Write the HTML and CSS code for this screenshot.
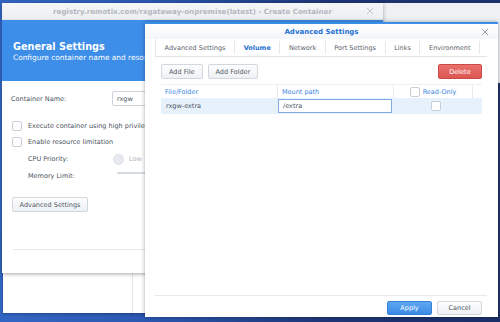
FILE: index.html
```html
<!DOCTYPE html>
<html>
<head>
<meta charset="utf-8">
<link rel="stylesheet" href="styles.css">
</head>
<body>
<div class="desktop">
  <div class="win win-low"><div class="pane-left"></div><div class="pane-right"></div></div>
  <div class="win win-right"></div>

  <div class="win create">
    <div class="titlebar">
      <span class="title">registry.remotix.com/rxgateway-onpremise(latest) - Create Container</span>
      <svg class="close" width="8" height="8" viewBox="0 0 8 8"><path d="M1 1L7 7M7 1L1 7" stroke="#c3c7cc" stroke-width="1"/></svg>
    </div>
    <div class="hero">
      <div class="hero-title">General Settings</div>
      <div class="hero-sub">Configure container name and resources</div>
    </div>
    <div class="form">
      <div class="name-row"><span class="lbl">Container Name:</span><div class="text-input">rxgw</div></div>
      <div class="cb-row first"><span class="cb"></span><span>Execute container using high privileges</span></div>
      <div class="cb-row"><span class="cb"></span><span>Enable resource limitation</span></div>
      <div class="sub-row cpu"><span class="sub-lbl">CPU Priority:</span><span class="radio"></span><span class="dim">Low</span></div>
      <div class="sub-row mem"><span class="sub-lbl">Memory Limit:</span><span class="slider"></span></div>
      <div class="adv-wrap"><button class="btn adv">Advanced Settings</button></div>
      <div class="hr"></div>
    </div>
  </div>

  <div class="dialog">
    <div class="dlg-head">
      <span class="dlg-title">Advanced Settings</span>
      <svg class="dlg-close" width="8" height="8" viewBox="0 0 8 8"><path d="M1 1L7 7M7 1L1 7" stroke="#9aa0a7" stroke-width="1"/></svg>
    </div>
    <div class="tabs">
      <div class="tab">Advanced Settings</div>
      <div class="tab active">Volume</div>
      <div class="tab">Network</div>
      <div class="tab">Port Settings</div>
      <div class="tab">Links</div>
      <div class="tab">Environment</div>
    </div>
    <div class="dlg-body">
      <div class="toolbar">
        <button class="btn">Add File</button>
        <button class="btn">Add Folder</button>
        <span class="spacer"></span>
        <button class="btn danger">Delete</button>
      </div>
      <div class="table">
        <div class="thead">
          <div class="c c1">File/Folder</div>
          <div class="c c2">Mount path</div>
          <div class="c c3"><span class="cb"></span><span>Read-Only</span></div>
          <div class="c c4"></div>
        </div>
        <div class="trow">
          <div class="c c1">rxgw-extra</div>
          <div class="c c2"><div class="cell-input">/extra</div></div>
          <div class="c c3"><span class="cb"></span></div>
          <div class="c c4"></div>
        </div>
      </div>
    </div>
    <div class="dlg-foot">
      <button class="btn primary">Apply</button>
      <button class="btn">Cancel</button>
    </div>
  </div>
</div>
</body>
</html>
```

FILE: styles.css
```css
* { box-sizing: border-box; }
html, body { margin: 0; padding: 0; }
body {
  width: 500px;
  height: 322px;
  overflow: hidden;
  font-family: "DejaVu Sans", Verdana, sans-serif;
  font-size: 6.5px;
  color: #4a535d;
}
.desktop {
  position: relative;
  width: 500px;
  height: 322px;
  overflow: hidden;
  background: linear-gradient(to right, #3366c4 0%, #2b57b0 30%, #1e3676 65%, #1b2f68 100%);
}
.win { position: absolute; background: #fff; }

.win-low {
  left: 3px; top: 230px; width: 420px; height: 83px;
  display: flex;
  box-shadow: 0 1px 3px rgba(0,0,0,.3);
}
.win-low .pane-left { width: 130px; border-right: 1px solid #e3e6ea; }
.win-right {
  left: 383px; top: 3px; right: 0; height: 80px;
  background: #eef0f3;
}

.create {
  left: 2px; top: 3px; width: 381px; height: 270px;
  display: flex; flex-direction: column;
  box-shadow: 0 1px 4px rgba(0,0,0,.35);
}
.titlebar {
  height: 17px; flex: none;
  display: grid;
  grid-template-columns: 1fr auto 1fr;
  align-items: center;
  background: linear-gradient(#f5f6f8, #eceef1);
  border-bottom: 1px solid #e1e4e8;
}
.titlebar .title {
  grid-column: 2;
  font-weight: bold;
  color: #b3b8bf;
  white-space: nowrap;
  font-size: 7.1px;
}
.titlebar .close { grid-column: 3; justify-self: end; margin-right: 9px; }

.hero {
  height: 61px; flex: none;
  background: #3d8ee8;
  color: #fff;
  padding: 21px 0 0 11px;
  white-space: nowrap;
  overflow: hidden;
}
.hero-title { font-size: 9.7px; font-weight: bold; line-height: 12px; }
.hero-sub { font-size: 7.4px; line-height: 10px; }

.form {
  padding-left: 9px;
  display: flex; flex-direction: column;
  white-space: nowrap;
}
.name-row { margin-top: 10px; height: 15px; display: flex; align-items: center; }
.lbl { width: 101px; }
.text-input {
  width: 90px; height: 15px;
  border: 1px solid #cdd3da;
  border-radius: 2px;
  padding-left: 4px;
  display: flex; align-items: center;
  color: #4a535d;
}
.cb {
  display: inline-block;
  width: 10px; height: 10px;
  border: 1px solid #c8ced6;
  border-radius: 2px;
  background: #fff;
  flex: none;
}
.cb-row { height: 10px; display: flex; align-items: center; gap: 6px; margin-top: 6px; padding-left: 1px; }
.cb-row.first { margin-top: 15px; }
.sub-row { height: 12px; display: flex; align-items: center; padding-left: 17px; }
.sub-row.cpu { margin-top: 6px; }
.sub-row.mem { margin-top: 5px; }
.sub-lbl { width: 85px; }
.radio {
  width: 11px; height: 11px;
  border-radius: 50%;
  background: #e6eaf0;
  border: 1px solid #dde2e8;
  margin-right: 5px;
}
.dim { color: #b0b5bc; }
.slider {
  margin-left: 4px; margin-top: -6px;
  width: 200px; height: 2px;
  background: #d6dbe1;
  border-radius: 1px;
}
.adv-wrap { margin-top: 15px; padding-left: 1px; display: flex; }
.hr { margin: 37px 0 0 2px; height: 1px; background: #e4e7eb; width: 360px; }

.btn {
  font-family: inherit;
  font-size: 6.5px;
  color: #515a64;
  height: 15px;
  padding: 0 7px;
  border: 1px solid #d2d7dd;
  border-radius: 2px;
  background: linear-gradient(#fdfdfe, #eef1f4);
  display: inline-flex; align-items: center; justify-content: center;
  margin: 0;
}
.btn.adv { width: 76px; }

.dialog {
  position: absolute;
  left: 145px; top: 22px; width: 353px; height: 295px;
  background: #fff;
  border-top: 2px solid #3b8fe8;
  box-shadow: 0 0 4px rgba(0,0,0,.35);
  display: flex; flex-direction: column;
}
.dlg-head {
  height: 15px; flex: none;
  display: grid;
  grid-template-columns: 1fr auto 1fr;
  align-items: center;
  background: linear-gradient(#ffffff, #f2f5f9);
}
.dlg-title { grid-column: 2; font-weight: bold; color: #1f70d3; font-size: 7px; }
.dlg-close { grid-column: 3; justify-self: end; margin-right: 9px; }

.tabs {
  height: 18px; flex: none;
  margin: 0 11px 0 10px;
  display: flex;
  border-bottom: 1px solid #e1e5ea;
  border-left: 1px solid #e4e7eb;
}
.tab {
  padding: 0 8.6px;
  display: flex; align-items: center;
  border-right: 1px solid #e4e7eb;
  color: #59616b;
  white-space: nowrap;
  margin: 2px 0;
}
.tab.active { font-weight: bold; color: #1f70d3; }

.dlg-body { padding: 7px 16px 0 16px; }
.toolbar { display: flex; gap: 5px; }
.spacer { flex: 1; }
.btn.danger {
  color: #fff;
  width: 44px;
  background: linear-gradient(#e9706d, #dc5752);
  border-color: #cc4a45;
}
.table { margin-top: 5px; width: 321px; }
.thead, .trow { display: grid; grid-template-columns: 117px 116px 79px 9px; }
.thead { height: 14px; border-top: 1px solid #eef0f3; }
.thead .c { color: #3a86df; display: flex; align-items: center; padding-left: 4px; white-space: nowrap; }
.thead .c1, .thead .c2, .thead .c3 { border-right: 1px solid #e6e9ed; }
.thead .c3 { justify-content: center; padding-left: 0; gap: 3px; }
.trow { height: 16px; background: #e7f1fc; }
.trow .c { display: flex; align-items: center; }
.trow .c1 { padding-left: 5px; color: #4a535d; }
.trow .c3 { justify-content: center; padding-left: 4px; }
.cell-input {
  width: 114px; height: 14px;
  border: 1px solid #7faae2;
  background: #fff;
  padding-left: 4px;
  display: flex; align-items: center;
  color: #4a535d;
}

.dlg-foot {
  margin: auto 11px 0 10px;
  border-top: 1px solid #e6e9ed;
  padding: 5px 5px 2px 0;
  display: flex; justify-content: flex-end; gap: 5px;
}
.dlg-foot .btn { width: 45px; height: 14px; }
.btn.primary {
  color: #fff;
  background: linear-gradient(#5ea7f1, #3b8ae6);
  border-color: #3380da;
}
```
